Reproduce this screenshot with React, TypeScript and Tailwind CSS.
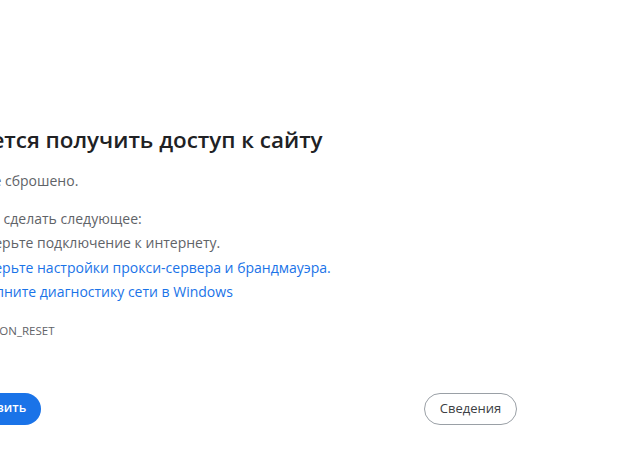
export default function App() {
  const suggestions = [
    { text: 'Проверьте подключение к интернету.', link: false },
    { text: 'Проверьте настройки прокси-сервера и брандмауэра.', link: true },
    { text: 'Выполните диагностику сети в Windows', link: true },
  ];

  return (
    <div
      className="w-[630px] h-[472px] overflow-hidden bg-white"
      style={{ fontFamily: '"Open Sans", "Noto Sans", sans-serif' }}
    >
      <div className="-ml-[83px] w-[600px] pt-[125px]">
        {/* Main message */}
        <h1 className="text-[22.4px] leading-[30px] font-semibold text-[#202124]">
          Не удается получить доступ к сайту
        </h1>
        <p className="mt-[14px] text-[14px] leading-6 text-[#5f6368]">Соединение сброшено.</p>

        {/* Suggestions */}
        <div className="mt-[14px] text-[14px] text-[#5f6368]">
          <p className="leading-6">Попробуйте сделать следующее:</p>
          <ul className="list-disc pl-[42px]">
            {suggestions.map((item) => (
              <li key={item.text} className="leading-[24.5px]">
                {item.link ? (
                  <a href="#" className="text-[#1a73e8]">
                    {item.text}
                  </a>
                ) : (
                  item.text
                )}
              </li>
            ))}
          </ul>
        </div>

        <div className="mt-[18px] text-[11.5px] leading-4 text-[#5f6368]">ERR_CONNECTION_RESET</div>

        {/* Buttons */}
        <div className="mt-[54px] flex justify-between items-center">
          <button className="h-8 px-[15px] rounded-full bg-[#1a73e8] text-white text-[12.5px] font-semibold">
            Перезагрузить
          </button>
          <button className="h-8 w-[93px] rounded-full border border-[#9aa0a6] text-[#3c4043] text-[13px]">
            Сведения
          </button>
        </div>
      </div>
    </div>
  );
}
